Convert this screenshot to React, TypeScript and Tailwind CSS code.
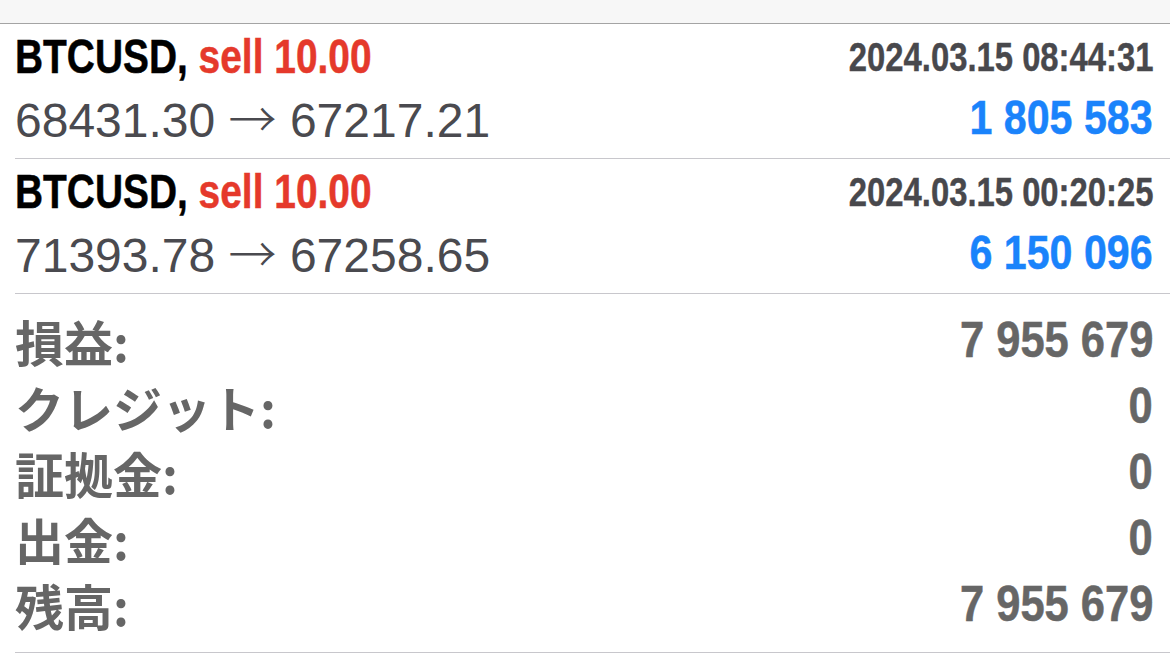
import React from 'react';

const sans = "font-['Liberation_Sans',Arial,sans-serif]";

const deals = [
  { open: '68431.30', close: '67217.21', time: '2024.03.15 08:44:31', profit: '1 805 583' },
  { open: '71393.78', close: '67258.65', time: '2024.03.15 00:20:25', profit: '6 150 096' },
];

const totals = [
  { label: '損益:', value: '7 955 679' },
  { label: 'クレジット:', value: '0' },
  { label: '証拠金:', value: '0' },
  { label: '出金:', value: '0' },
  { label: '残高:', value: '7 955 679' },
];

export default function App() {
  return (
    <div className="w-[1170px] h-[658px] bg-white overflow-hidden">
      <div className="h-[24px] bg-[#f7f7f7] border-b border-[#a4a4a4]" />

      <div className="pl-[15px]">
        {deals.map((d, i) => (
          <div key={i} className="h-[135px] border-b border-[#c8c7cc] pr-[17px] pt-[2px] flex flex-col">
            <div className="h-[62px] flex items-center justify-between">
              <span className={`${sans} inline-block origin-left scale-x-[0.81] font-bold text-[48px] leading-none text-black whitespace-nowrap [-webkit-text-stroke:0.5px]`}>
                BTCUSD, <span className="text-[#e5392b]">sell 10.00</span>
              </span>
              <span className={`${sans} inline-block origin-right scale-x-[0.82] font-bold text-[40px] leading-none text-[#48484c] whitespace-nowrap [-webkit-text-stroke:0.4px]`}>
                {d.time}
              </span>
            </div>
            <div className="h-[60px] flex items-center justify-between">
              <span className={`${sans} text-[48px] leading-none text-[#4a4a4f] whitespace-nowrap`}>
                {d.open} <span className="font-['Noto_Sans_CJK_JP',sans-serif] font-light">→</span> {d.close}
              </span>
              <span className={`${sans} inline-block origin-right scale-x-[0.857] font-bold text-[48px] leading-none text-[#1a83fb] whitespace-nowrap [-webkit-text-stroke:0.5px]`}>
                {d.profit}
              </span>
            </div>
          </div>
        ))}

        <div className="border-b border-[#c8c7cc] pr-[17px] pt-[13px] pb-[15px] flex flex-col">
          {totals.map((t) => (
            <div key={t.label} className="h-[66px] flex items-center justify-between text-[#666666]">
              <span className="font-['Noto_Sans_CJK_JP',sans-serif] font-bold text-[49px] leading-none">{t.label}</span>
              <span className={`${sans} inline-block origin-right scale-x-[0.87] font-bold text-[50px] leading-none whitespace-nowrap [-webkit-text-stroke:0.5px]`}>
                {t.value}
              </span>
            </div>
          ))}
        </div>
      </div>
    </div>
  );
}
